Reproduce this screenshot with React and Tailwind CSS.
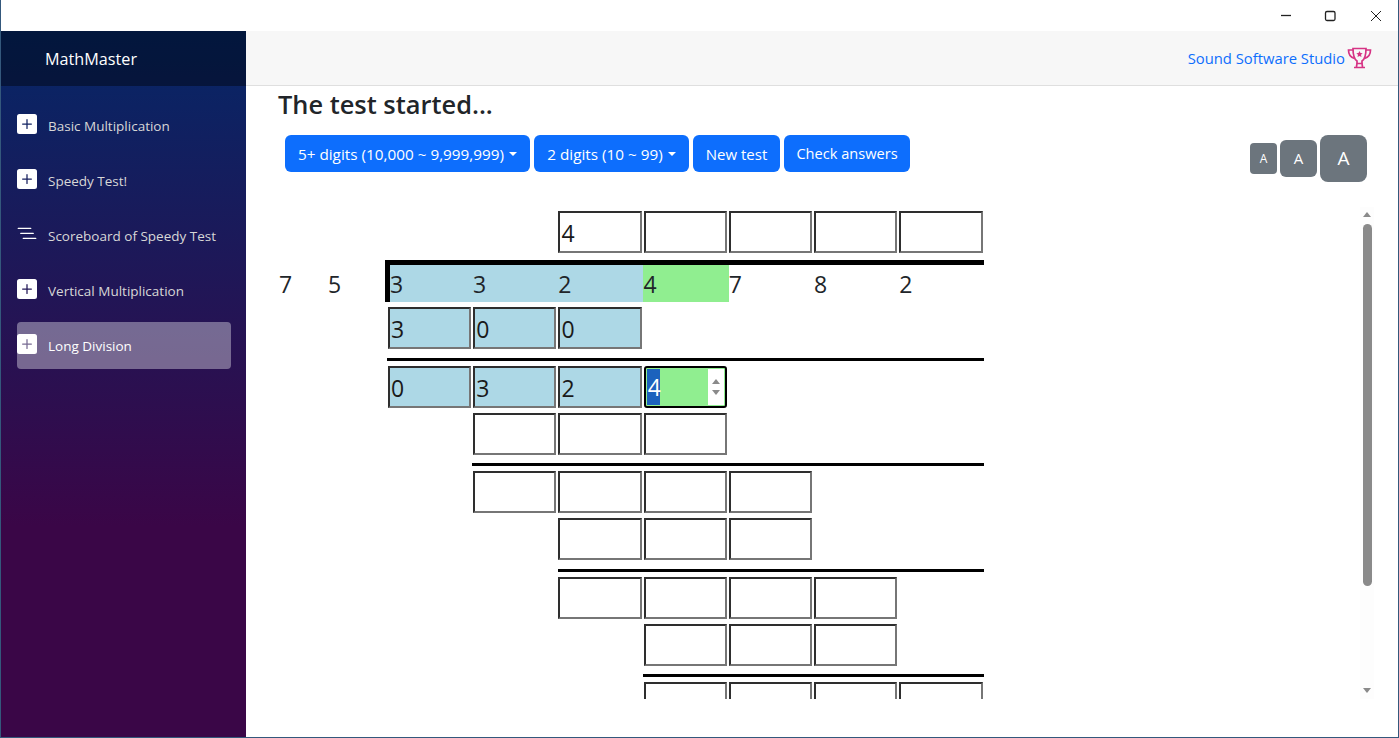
import { BsPlusSquareFill, BsListNested } from "react-icons/bs"

const NAV = [
  { label: "Basic Multiplication", icon: "plus" },
  { label: "Speedy Test!", icon: "plus" },
  { label: "Scoreboard of Speedy Test", icon: "list" },
  { label: "Vertical Multiplication", icon: "plus" },
  { label: "Long Division", icon: "plus", active: true },
]

const Trophy = () => (
  <svg width="25" height="22" viewBox="0 0 25 22" fill="none" stroke="#d63384" strokeWidth="1.700" className="shrink-0">
    <path d="M6 1.500h13c0 6-.8 10.500-4 12.500v2.500h-5V14c-3.200-2-4-6.500-4-12.500z" />
    <path d="M6 3H1.500c0 4.500 2.500 7.500 6 8.500M19 3h4.500c0 4.500-2.500 7.500-6 8.500" />
    <path d="M7 20.500h11M9.500 20.500c0-2 .5-4 1-4M15.500 20.500c0-2-.5-4-1-4" />
    <path d="M12.500 4l1 2.100 2.200.2-1.700 1.500.5 2.200-2-1.100-2 1.100.5-2.200-1.700-1.500 2.200-.2z" fill="#d63384" stroke="none" />
  </svg>
)

const Cell = ({ value, color }) => {
  if (value === null) return <div />
  const bg = color === "blue" ? "bg-[#add8e6]" : "bg-white"
  return (
    <div className={`mx-px h-[42px] border-2 border-t-[#2e2e2e] border-l-[#2e2e2e] border-b-[#767676] border-r-[#767676] pl-px text-[23px] leading-[41px] text-[#1a1a1a] ${bg}`}>
      {value}
    </div>
  )
}

const ActiveCell = () => (
  <div className="mx-px flex h-[42px] rounded-[3px] border-2 border-black bg-[#90ee90] p-px text-[23px] leading-[37px] text-white">
    <span className="h-full w-[13px] bg-[#1c62bd] pl-px">4</span>
    <span className="ml-auto flex w-4 flex-col items-center justify-center gap-[6px] bg-white">
      <span className="h-0 w-0 border-x-4 border-b-[5px] border-x-transparent border-b-[#8a8a8a]" />
      <span className="h-0 w-0 border-x-4 border-t-[5px] border-x-transparent border-t-[#8a8a8a]" />
    </span>
  </div>
)

const Row = ({ cells, color }) => (
  <div className="grid grid-cols-[repeat(7,85.24px)]">
    {cells.map((c, i) => (
      <Cell key={i} value={c} color={color} />
    ))}
  </div>
)

const Line = ({ className }) => (
  <div className="mt-[3.5px] grid w-[597px] grid-cols-7">
    <div className={`h-[3px] bg-black ${className}`} />
  </div>
)

const Worksheet = () => (
  <div className="flex flex-col gap-[5px] pt-[4px] text-[#212529]">
    <div className="ml-[109px] mb-[2px]">
      <Row cells={[null, null, "4", "", "", "", ""]} />
    </div>
    <div className="flex h-[42px] text-[23px]">
      <div className="w-[49px] pt-[6px] pl-px leading-[36px]">7</div>
      <div className="w-[58px] pt-[6px] pl-px leading-[36px]">5</div>
      <div className="grid h-[42px] w-[599px] grid-cols-[83px_repeat(6,85.24px)] overflow-hidden border-t-[5px] border-l-[5px] border-black leading-[39px]">
        <div className="bg-[#add8e6]">3</div>
        <div className="bg-[#add8e6]">3</div>
        <div className="bg-[#add8e6]">2</div>
        <div className="bg-[#90ee90]">4</div>
        <div>7</div>
        <div>8</div>
        <div>2</div>
      </div>
    </div>
    <div className="ml-[109px] flex flex-col gap-[5px]">
      <Row cells={["3", "0", "0", null, null, null, null]} color="blue" />
      <Line className="col-start-1 col-span-7" />
      <div className="grid grid-cols-[repeat(7,85.24px)]">
        <Cell value="0" color="blue" />
        <Cell value="3" color="blue" />
        <Cell value="2" color="blue" />
        <ActiveCell />
      </div>
      <Row cells={[null, "", "", "", null, null, null]} />
      <Line className="col-start-2 col-span-6" />
      <Row cells={[null, "", "", "", "", null, null]} />
      <Row cells={[null, null, "", "", "", null, null]} />
      <Line className="col-start-3 col-span-5" />
      <Row cells={[null, null, "", "", "", "", null]} />
      <Row cells={[null, null, null, "", "", "", null]} />
      <Line className="col-start-4 col-span-4" />
      <Row cells={[null, null, null, "", "", "", ""]} />
    </div>
  </div>
)

const Scrollbar = () => (
  <div className="flex h-[492px] w-[14px] flex-col items-center bg-[#fdfdfd] pt-[5px]">
    <span className="h-0 w-0 border-x-[4px] border-b-[5px] border-x-transparent border-b-[#8a8a8a]" />
    <span className="mt-[7px] h-[362px] w-[9px] rounded-full bg-[#8a8a8a]" />
    <span className="mt-auto mb-[6px] h-0 w-0 border-x-[4px] border-t-[5px] border-x-transparent border-t-[#8a8a8a]" />
  </div>
)

export default function App() {
  return (
    <div className="flex h-[738px] w-[1399px] flex-col overflow-hidden border-x border-b border-[#34587c] bg-white font-['Open_Sans','Liberation_Sans',sans-serif]">
      <div className="flex h-[31px] shrink-0 items-center justify-end bg-white">
        <svg width="120" height="31" viewBox="0 0 120 31" fill="none" stroke="#222" strokeWidth="1" className="mr-[15px]">
          <path d="M18 15.500h10" strokeWidth="1.300" />
          <rect x="62.500" y="11.500" width="9.500" height="9" rx="1.500" strokeWidth="1.300" />
          <path d="M108 11l10 10M118 11l-10 10" />
        </svg>
      </div>
      <div className="flex min-h-0 flex-1">
        <aside className="w-[245px] shrink-0 bg-[linear-gradient(180deg,#052767_0%,#3a0647_70%)]">
          <div className="flex h-[55px] items-center bg-black/40 pt-px pl-[44px] text-[16.200px] text-white">MathMaster</div>
          <nav className="flex flex-col gap-2 px-4 pt-4">
            {NAV.map((item) => (
              <a
                key={item.label}
                className={`flex h-[47px] items-center gap-[11px] rounded-[4px] text-[13.500px] ${item.active ? "w-[214px] bg-white/[0.37] text-white" : "text-[#d7d7d7]"}`}
              >
                <span className="flex w-5 -translate-y-[2px] justify-center text-white">
                  {item.icon === "plus" ? <BsPlusSquareFill size={20} /> : <BsListNested size={20} />}
                </span>
                <span className="pt-[2px]">{item.label}</span>
              </a>
            ))}
          </nav>
        </aside>
        <main className="flex min-w-0 flex-1 flex-col">
          <header className="flex h-[55px] shrink-0 items-center justify-end gap-[2px] border-b border-[#dfdfdf] bg-[#f7f7f7] pr-[26px]">
            <a className="text-[14.800px] text-[#0d6efd]">Sound Software Studio</a>
            <Trophy />
          </header>
          <div className="flex flex-col pl-8 pr-[24px]">
            <h3 className="h-[38px] text-[25.400px] leading-[36px] font-semibold text-[#212529]">The test started...</h3>
            <div className="flex h-[83px] items-start justify-between pt-[11px] pl-[7px] pr-[7px]">
              <div className="flex gap-1 text-[15px] text-white">
                <button className="flex h-[37px] w-[245px] items-center justify-center gap-[5px] rounded-md bg-[#0d6efd] pt-px text-[15.300px]">
                  5+ digits (10,000 ~ 9,999,999)
                  <span className="h-0 w-0 border-x-[4px] border-t-[4px] border-x-transparent border-t-white" />
                </button>
                <button className="flex h-[37px] w-[155px] items-center justify-center gap-[5px] rounded-md bg-[#0d6efd] pt-px text-[15.300px]">
                  2 digits (10 ~ 99)
                  <span className="h-0 w-0 border-x-[4px] border-t-[4px] border-x-transparent border-t-white" />
                </button>
                <button className="h-[37px] w-[87px] rounded-md bg-[#0d6efd] pt-px">New test</button>
                <button className="h-[37px] w-[126px] rounded-md bg-[#0d6efd] pt-px text-[14.600px]">Check answers</button>
              </div>
              <div className="flex items-center gap-[3px] text-white">
                <button className="h-[31px] w-[27px] rounded-[4px] bg-[#6c757d] text-[12px]">A</button>
                <button className="h-[37px] w-[37px] rounded-md bg-[#6c757d] text-[15px]">A</button>
                <button className="h-[47px] w-[47px] rounded-lg bg-[#6c757d] text-[19px]">A</button>
              </div>
            </div>
            <div className="flex justify-between">
              <div className="h-[492px] w-[900px] overflow-hidden">
                <Worksheet />
              </div>
              <Scrollbar />
            </div>
          </div>
        </main>
      </div>
    </div>
  )
}
